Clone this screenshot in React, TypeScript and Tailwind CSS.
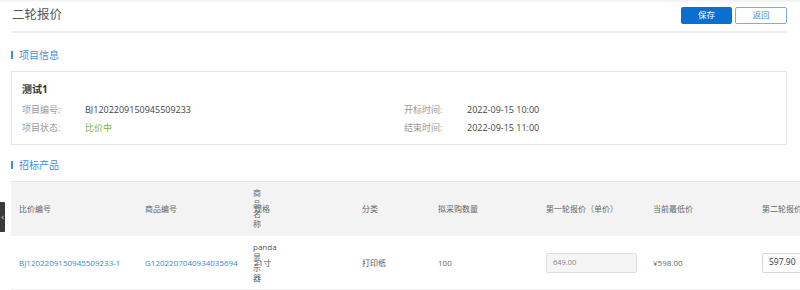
import React from "react";

const font = "font-['Open_Sans','Noto_Sans_CJK_SC',sans-serif]";

function SectionTitle({ children }: { children: React.ReactNode }) {
  return (
    <div className="flex items-center">
      <span className="w-[2px] h-[8px] bg-[#3b8fe0]" />
      <span className="ml-[6px] text-[10px] leading-[14px] text-[#3b8fe0]">{children}</span>
    </div>
  );
}

function InfoRow({ label, value, valueClass }: { label: string; value: string; valueClass?: string }) {
  return (
    <div className="flex items-center h-[18px] text-[9px]">
      <span className="w-[63px] text-[#999]">{label}</span>
      <span className={valueClass ?? "text-[#444]"}>{value}</span>
    </div>
  );
}

export default function App() {
  return (
    <div className={`relative w-[800px] h-[290px] overflow-hidden bg-white ${font}`}>
      <div className="absolute left-0 top-0 w-full h-[3px] bg-gradient-to-b from-[#efefef] to-white" />
      <div className="pl-[11px] pr-[13px]">
        {/* header */}
        <div className="flex items-center justify-between h-[31px]">
          <span className="pl-[1px] text-[12.5px] text-[#555]">二轮报价</span>
          <div className="flex items-center gap-[3px]">
            <button className="w-[51px] h-[17px] rounded-[2px] bg-[#0b6fcd] text-white text-[8.5px] leading-none">
              保存
            </button>
            <button className="w-[52px] h-[17px] rounded-[2px] border border-[#79ade4] bg-white text-[#3b8fe0] text-[8.5px] leading-none">
              返回
            </button>
          </div>
        </div>
        <div className="h-[2px] bg-[#efefef]" />

        <div className="h-[38px] pt-[6px] flex items-center">
          <SectionTitle>项目信息</SectionTitle>
        </div>

        {/* info card */}
        <div className="border border-[#e6e6e6] pl-[10px] pt-[10px] pb-[7px]">
          <div className="text-[10px] leading-[14px] font-bold text-[#333]">测试1</div>
          <div className="mt-[5px] grid grid-cols-[382px_1fr]">
            <div>
              <InfoRow label="项目编号:" value="BJ1202209150945509233" />
              <InfoRow label="项目状态:" value="比价中" valueClass="text-[#7cb342]" />
            </div>
            <div>
              <InfoRow label="开标时间:" value="2022-09-15 10:00" />
              <InfoRow label="结束时间:" value="2022-09-15 11:00" />
            </div>
          </div>
        </div>

        <div className="h-[36px] pt-[4px] flex items-center">
          <SectionTitle>招标产品</SectionTitle>
        </div>

        {/* table */}
        <div className="w-[900px] border-t border-[#e8e8e8] text-[8px] text-[#666]">
          <div className="flex items-center h-[54px] bg-[#f3f3f3]">
            <div className="w-[126px] pl-[8px]">比价编号</div>
            <div className="w-[108px] pl-[8px]">商品编号</div>
            <div className="w-0 overflow-visible">
              <div className="ml-[8px] w-[8px] leading-[10.3px]">商品名称</div>
            </div>
            <div className="w-[109px] pl-[9px]">规格</div>
            <div className="w-[76px] pl-[8px]">分类</div>
            <div className="w-[108px] pl-[8px]">拟采购数量</div>
            <div className="w-[107px] pl-[8px]">第一轮报价（单价）</div>
            <div className="w-[109px] pl-[8px]">当前最低价</div>
            <div className="w-[150px] pl-[8px] whitespace-nowrap">第二轮报价（单价）</div>
          </div>
          <div className="flex items-center h-[54px] border-b border-[#eee]">
            <div className="w-[126px] pl-[8px] text-[#3a86d6]">BJ1202209150945509233-1</div>
            <div className="w-[108px] pl-[8px] text-[#3a86d6]">G1202207040934035694</div>
            <div className="w-0 overflow-visible">
              <div className="ml-[8px] w-[8px] leading-[10.5px] text-[#555]">panda显示器</div>
            </div>
            <div className="w-[109px] pl-[9px] text-[#555]">21寸</div>
            <div className="w-[76px] pl-[8px] text-[#555]">打印纸</div>
            <div className="w-[108px] pl-[8px]">100</div>
            <div className="w-[107px] pl-[8px]">
              <div className="w-[91px] h-[20px] flex items-center px-[6px] rounded-[2px] border border-[#dedede] bg-[#f5f5f5] text-[7.5px] text-[#888]">
                649.00
              </div>
            </div>
            <div className="w-[109px] pl-[8px]">¥598.00</div>
            <div className="w-[150px] pl-[8px]">
              <div className="w-[91px] h-[20px] flex items-center px-[6px] rounded-[2px] border border-[#d6d6d6] bg-white text-[8.5px] text-[#333]">
                597.90
              </div>
            </div>
          </div>
        </div>
      </div>

      {/* collapse tab */}
      <div className="absolute left-0 top-[202px] w-[5px] h-[30px] bg-[#3a3a3a] rounded-r-[1px] flex items-center justify-center overflow-hidden">
        <span className="text-[9px] leading-none text-[#ddd] font-['DejaVu_Sans',sans-serif]">‹</span>
      </div>
    </div>
  );
}
